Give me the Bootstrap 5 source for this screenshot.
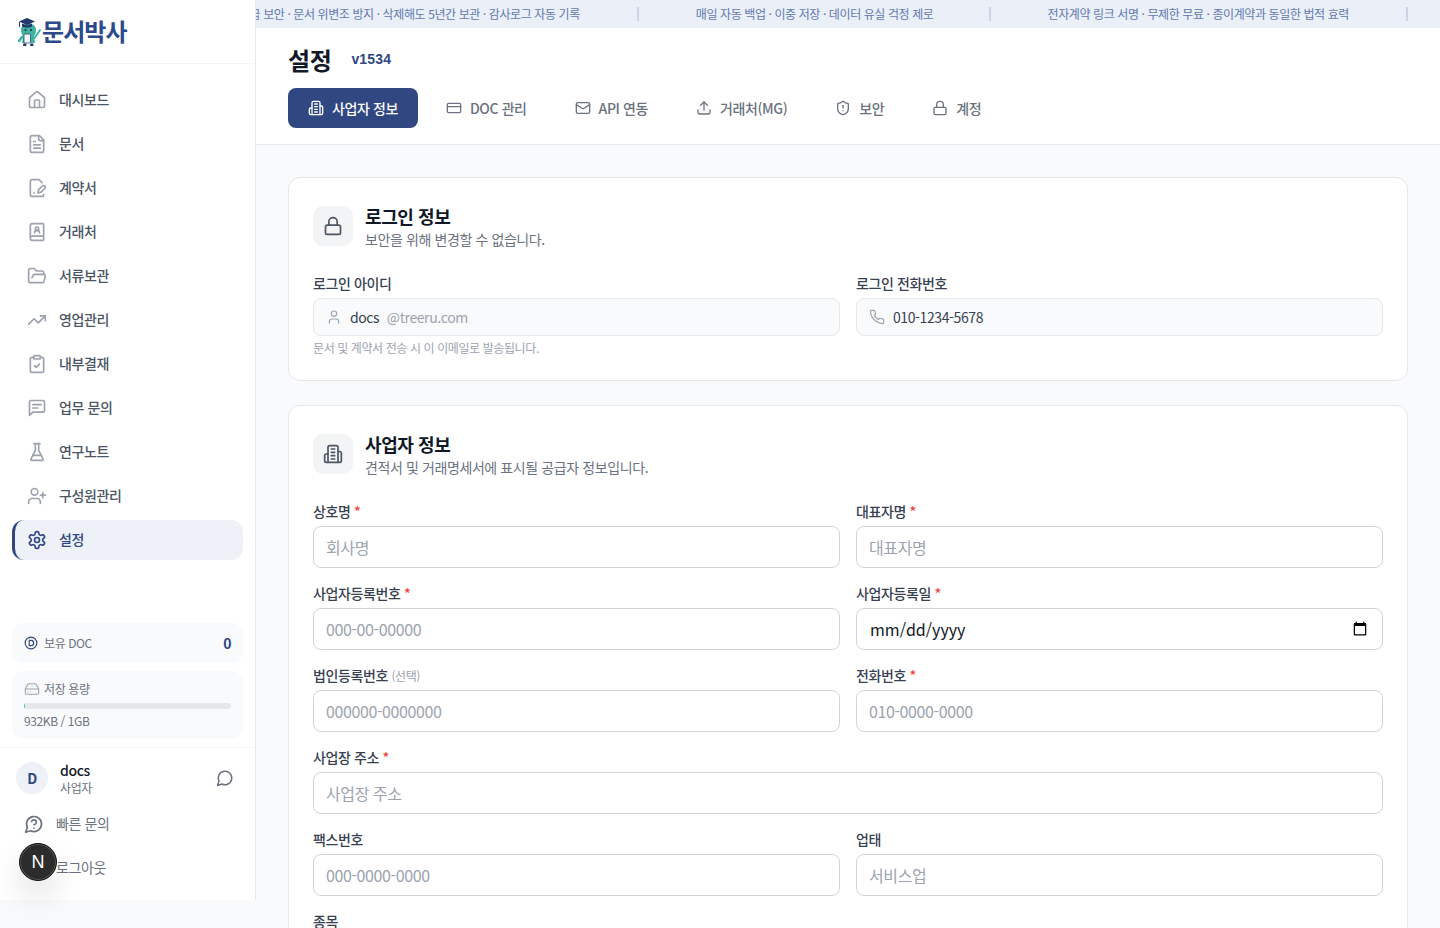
<!DOCTYPE html>
<html lang="ko">
<head>
<meta charset="utf-8">
<title>설정 - 문서박사</title>
<link rel="stylesheet" href="https://cdn.jsdelivr.net/npm/bootstrap@5.3.0/dist/css/bootstrap.min.css">
<style>
:root{--navy:#304781;}
html,body{height:100%;overflow:hidden;}
body{font-family:"Noto Sans CJK KR","Noto Sans",sans-serif;background:#f9fafb;color:#111827;font-size:14px;letter-spacing:-.4px;}
.ico{width:20px;height:20px;fill:none;stroke:currentColor;stroke-width:2;stroke-linecap:round;stroke-linejoin:round;flex-shrink:0;}
.ico-16{width:16px;height:16px;}
.ico-14{width:14px;height:14px;}
.ico-18{width:18px;height:18px;}
.shell{height:928px;}
.side{width:256px;height:900px;background:#fff;border-right:1px solid #e5e7eb;flex-shrink:0;}
.side-top{height:64px;border-bottom:1px solid #f3f4f6;padding:0 16px;}
.brand-name{font-size:24px;font-weight:700;color:#2c4a8a;letter-spacing:-.9px;line-height:1;padding-bottom:2px;}
.side-nav{padding:16px 12px 0;gap:4px;}
.side-link{height:40px;padding:0 12px 1px;border-left:3px solid transparent;border-radius:12px;color:#4b5563;font-weight:500;font-size:14px;gap:12px;text-decoration:none;}
.side-link .ico{color:#9ca3af;}
.side-link.on{background:#eef1f8;border-left-color:var(--navy);color:var(--navy);}
.side-link.on .ico{color:var(--navy);}
.side-stats{padding:0 12px 8px;gap:8px;margin-top:auto;border-bottom:1px solid #f3f4f6;}
.stat-box{background:#f9fafb;border-radius:12px;padding:0 12px;color:#6b7280;font-size:12px;}
.stat-doc{height:40px;}
.stat-store{height:68px;padding-top:12px;}
.stat-line{height:12px;gap:4px;line-height:12px;}
.stat-doc .ico{color:var(--navy);}
.stat-store .ico{color:#9ca3af;stroke-width:1.6;}
.stat-gap{gap:6px;}
.stat-val{font-weight:700;color:var(--navy);font-size:14px;}
.store-bar{height:6px;background:#e5e7eb;margin:8px 0 4px;border-radius:4px;}
.store-fill{background:#34d399;min-width:1px;}
.store-text{line-height:16px;}
.side-foot{padding:12px;}
.me-row{height:36px;padding:0 9px 0 4px;margin-bottom:8px;gap:12px;}
.me-ava{width:32px;height:32px;background:#eef1f8;color:var(--navy);font-weight:600;font-size:14px;}
.me-name{font-size:14px;font-weight:500;line-height:20px;color:#111827;}
.me-role{font-size:12px;line-height:16px;color:#6b7280;}
.me-chat{color:#6b7280;}
.foot-link{height:40px;padding:0 12px 1px;gap:12px;color:#6b7280;font-size:14px;text-decoration:none;}
.foot-link+.foot-link{margin-top:4px;}
.dev-badge{position:absolute;left:19px;top:843px;width:38px;height:38px;background:#2c2c2c;border:1px solid #111;box-shadow:inset 0 0 0 1px #555,0 16px 32px rgba(0,0,0,.12);color:#fff;font:400 18px/1 "Liberation Sans",sans-serif;letter-spacing:0;}
.main-pane{min-width:0;height:928px;}
.ticker{height:28px;background:#ebeff8;overflow:hidden;flex-shrink:0;padding-right:32px;gap:57px;font-size:12px;color:#6079ad;white-space:nowrap;}
.ticker>span{flex-shrink:0;}
.ticker>.tick-mid{margin-right:-2px;}
.tick-sep{width:2px;height:14px;background:#ccd5e6;}
.page-head{background:#fff;border-bottom:1px solid #e5e7eb;padding:16px 32px;height:117px;flex-shrink:0;}
.page-title{font-size:24px;line-height:32px;font-weight:700;color:#111827;margin:0;}
.page-ver{font:700 14px/30px "Liberation Sans",sans-serif;color:var(--navy);margin-left:20px;letter-spacing:.2px;padding-bottom:2px;}
.tabs-row{margin-top:12px;gap:8px;}
.tabs-row .nav-link{height:40px;padding:0 20px;gap:8px;display:flex;align-items:center;font-size:14px;font-weight:500;color:#6b7280;border-radius:8px;}
.tabs-row .nav-link.active{background:var(--navy);color:#fff;}
.page-body{padding:32px;gap:24px;}
.sheet{border:1px solid #e5e7eb;border-radius:12px;background:#fff;padding:24px;flex-shrink:0;box-shadow:none;}
.sheet-head{height:48px;margin-bottom:24px;gap:12px;}
.sheet-ico{width:40px;height:40px;background:#f3f4f6;border-radius:10px;color:#4b5563;}
.sheet-title{font-size:18px;font-weight:600;line-height:28px;color:#111827;margin:0;}
.sheet-sub{font-size:14px;height:20px;line-height:18px;color:#6b7280;margin:0;}
.field-label{font-size:14px;height:20px;line-height:19px;font-weight:500;color:#374151;margin-bottom:4px;display:block;}
.req{color:#ef4444;}
.opt{font-size:12px;line-height:1;font-weight:400;color:#9ca3af;}
.field-input{height:42px;border:1px solid #d1d5db;border-radius:8px;padding:0 12px;font-size:16px;color:#111827;letter-spacing:-.4px;}
.field-input::placeholder{color:#9ca3af;}
.field-date{letter-spacing:normal;padding-left:13px;}
.field-ro{height:38px;border:1px solid #e5e7eb;border-radius:8px;background:#f9fafb;padding:0 12px;gap:8px;font-size:14px;color:#374151;}
.field-ro .ico{color:#9ca3af;stroke-width:1.75;}
.dim{color:#9ca3af;margin-left:4px;}
.field-help{font-size:12px;line-height:16px;color:#9ca3af;margin-top:4px;}
</style>
</head>
<body>
<svg width="0" height="0" class="position-absolute" aria-hidden="true">
<symbol id="i-home" viewBox="0 0 24 24"><path d="M15 21v-8a1 1 0 0 0-1-1h-4a1 1 0 0 0-1 1v8"/><path d="M3 10a2 2 0 0 1 .709-1.528l7-5.999a2 2 0 0 1 2.582 0l7 5.999A2 2 0 0 1 21 10v9a2 2 0 0 1-2 2H5a2 2 0 0 1-2-2z"/></symbol>
<symbol id="i-file" viewBox="0 0 24 24"><path d="M15 2H6a2 2 0 0 0-2 2v16a2 2 0 0 0 2 2h12a2 2 0 0 0 2-2V7Z"/><path d="M14 2v4a2 2 0 0 0 2 2h4"/><path d="M10 9H8"/><path d="M16 13H8"/><path d="M16 17H8"/></symbol>
<symbol id="i-sign" viewBox="0 0 24 24"><path d="M20 19.5v.5a2 2 0 0 1-2 2H6a2 2 0 0 1-2-2V4a2 2 0 0 1 2-2h8.5L18 5.5"/><path d="M8 18h1"/><path d="M18.42 9.61a2.1 2.1 0 1 1 2.97 2.97L16.95 17 13 18l.99-3.95 4.43-4.44Z"/></symbol>
<symbol id="i-book" viewBox="0 0 24 24"><path d="M15 13a3 3 0 1 0-6 0"/><path d="M4 19.5v-15A2.5 2.5 0 0 1 6.5 2H19a1 1 0 0 1 1 1v18a1 1 0 0 1-1 1H6.5a1 1 0 0 1 0-5H20"/><circle cx="12" cy="8" r="2"/></symbol>
<symbol id="i-folder" viewBox="0 0 24 24"><path d="m6 14 1.5-2.9A2 2 0 0 1 9.24 10H20a2 2 0 0 1 1.94 2.5l-1.54 6a2 2 0 0 1-1.95 1.5H4a2 2 0 0 1-2-2V5a2 2 0 0 1 2-2h3.9a2 2 0 0 1 1.69.9l.81 1.2a2 2 0 0 0 1.67.9H18a2 2 0 0 1 2 2v2"/></symbol>
<symbol id="i-trend" viewBox="0 0 24 24"><polyline points="22 7 13.5 15.5 8.5 10.5 2 17"/><polyline points="16 7 22 7 22 13"/></symbol>
<symbol id="i-clip" viewBox="0 0 24 24"><rect width="8" height="4" x="8" y="2" rx="1"/><path d="M16 4h2a2 2 0 0 1 2 2v14a2 2 0 0 1-2 2H6a2 2 0 0 1-2-2V6a2 2 0 0 1 2-2h2"/><path d="m9 14 2 2 4-4"/></symbol>
<symbol id="i-msg" viewBox="0 0 24 24"><path d="M21 15a2 2 0 0 1-2 2H7l-4 4V5a2 2 0 0 1 2-2h14a2 2 0 0 1 2 2z"/><path d="M17 8H7"/><path d="M13 12H7"/></symbol>
<symbol id="i-flask" viewBox="0 0 24 24"><path d="M10 2v7.527a2 2 0 0 1-.211.896L4.72 20.55a1 1 0 0 0 .9 1.45h12.76a1 1 0 0 0 .9-1.45l-5.069-10.127A2 2 0 0 1 14 9.527V2"/><path d="M8.5 2h7"/><path d="M7 16h10"/></symbol>
<symbol id="i-uplus" viewBox="0 0 24 24"><path d="M16 21v-2a4 4 0 0 0-4-4H6a4 4 0 0 0-4 4v2"/><circle cx="9" cy="7" r="4"/><line x1="19" x2="19" y1="8" y2="14"/><line x1="22" x2="16" y1="11" y2="11"/></symbol>
<symbol id="i-gear" viewBox="0 0 24 24"><path d="M12.22 2h-.44a2 2 0 0 0-2 2v.18a2 2 0 0 1-1 1.73l-.43.25a2 2 0 0 1-2 0l-.15-.08a2 2 0 0 0-2.73.73l-.22.38a2 2 0 0 0 .73 2.73l.15.1a2 2 0 0 1 1 1.72v.51a2 2 0 0 1-1 1.74l-.15.09a2 2 0 0 0-.73 2.73l.22.38a2 2 0 0 0 2.73.73l.15-.08a2 2 0 0 1 2 0l.43.25a2 2 0 0 1 1 1.73V20a2 2 0 0 0 2 2h.44a2 2 0 0 0 2-2v-.18a2 2 0 0 1 1-1.73l.43-.25a2 2 0 0 1 2 0l.15.08a2 2 0 0 0 2.73-.73l.22-.39a2 2 0 0 0-.73-2.73l-.15-.08a2 2 0 0 1-1-1.74v-.5a2 2 0 0 1 1-1.74l.15-.09a2 2 0 0 0 .73-2.73l-.22-.38a2 2 0 0 0-2.73-.73l-.15.08a2 2 0 0 1-2 0l-.43-.25a2 2 0 0 1-1-1.73V4a2 2 0 0 0-2-2z"/><circle cx="12" cy="12" r="3"/></symbol>
<symbol id="i-build" viewBox="0 0 24 24"><path d="M6 22V4a2 2 0 0 1 2-2h8a2 2 0 0 1 2 2v18Z"/><path d="M6 12H4a2 2 0 0 0-2 2v6a2 2 0 0 0 2 2h2"/><path d="M18 9h2a2 2 0 0 1 2 2v9a2 2 0 0 1-2 2h-2"/><path d="M10 6h4"/><path d="M10 10h4"/><path d="M10 14h4"/><path d="M10 18h4"/></symbol>
<symbol id="i-card" viewBox="0 0 24 24"><rect width="20" height="14" x="2" y="5" rx="2"/><line x1="2" x2="22" y1="10" y2="10"/></symbol>
<symbol id="i-mail" viewBox="0 0 24 24"><rect width="20" height="16" x="2" y="4" rx="2"/><path d="m22 7-8.97 5.7a1.94 1.94 0 0 1-2.06 0L2 7"/></symbol>
<symbol id="i-up" viewBox="0 0 24 24"><path d="M21 15v4a2 2 0 0 1-2 2H5a2 2 0 0 1-2-2v-4"/><polyline points="17 8 12 3 7 8"/><line x1="12" x2="12" y1="3" y2="15"/></symbol>
<symbol id="i-shield" viewBox="0 0 24 24"><path d="M20 13c0 5-3.5 7.5-7.66 8.95a1 1 0 0 1-.67-.01C7.5 20.5 4 18 4 13V6a1 1 0 0 1 1-1c2 0 4.5-1.2 6.24-2.72a1.17 1.17 0 0 1 1.52 0C14.51 3.81 17 5 19 5a1 1 0 0 1 1 1z"/><path d="M12 8v4"/><path d="M12 16h.01"/></symbol>
<symbol id="i-lock" viewBox="0 0 24 24"><rect width="18" height="11" x="3" y="11" rx="2"/><path d="M7 11V7a5 5 0 0 1 10 0v4"/></symbol>
<symbol id="i-user" viewBox="0 0 24 24"><path d="M19 21v-2a4 4 0 0 0-4-4H9a4 4 0 0 0-4 4v2"/><circle cx="12" cy="7" r="4"/></symbol>
<symbol id="i-phone" viewBox="0 0 24 24"><path d="M22 16.92v3a2 2 0 0 1-2.18 2 19.79 19.79 0 0 1-8.63-3.07 19.5 19.5 0 0 1-6-6 19.79 19.79 0 0 1-3.07-8.67A2 2 0 0 1 4.11 2h3a2 2 0 0 1 2 1.72 12.84 12.84 0 0 0 .7 2.81 2 2 0 0 1-.45 2.11L8.09 9.91a16 16 0 0 0 6 6l1.27-1.27a2 2 0 0 1 2.11-.45 12.84 12.84 0 0 0 2.81.7A2 2 0 0 1 22 16.92z"/></symbol>
<symbol id="i-drive" viewBox="0 0 24 24"><line x1="22" x2="2" y1="12" y2="12"/><path d="M5.45 5.11 2 12v6a2 2 0 0 0 2 2h16a2 2 0 0 0 2-2v-6l-3.45-6.89A2 2 0 0 0 16.76 4H7.24a2 2 0 0 0-1.79 1.11z"/><line x1="6" x2="6.01" y1="16" y2="16"/><line x1="10" x2="10.01" y1="16" y2="16"/></symbol>
<symbol id="i-chat" viewBox="0 0 24 24"><path d="M7.9 20A9 9 0 1 0 4 16.1L2 22Z"/></symbol>
<symbol id="i-help" viewBox="0 0 24 24"><path d="M7.9 20A9 9 0 1 0 4 16.1L2 22Z"/><path d="M9.09 9a3 3 0 0 1 5.83 1c0 2-3 3-3 3"/><path d="M12 17h.01"/></symbol>
<symbol id="i-out" viewBox="0 0 24 24"><path d="M9 21H5a2 2 0 0 1-2-2V5a2 2 0 0 1 2-2h4"/><polyline points="16 17 21 12 16 7"/><line x1="21" x2="9" y1="12" y2="12"/></symbol>
<symbol id="i-coin" viewBox="0 0 24 24"><circle cx="12" cy="12" r="10"/><path d="M9 7.500h3a4.500 4.500 0 0 1 0 9H9z"/></symbol>
</svg>

<div class="shell d-flex">
  <aside class="side d-flex flex-column">
    <div class="side-top d-flex align-items-center">
      <svg width="26" height="30" viewBox="0 0 26 30" aria-hidden="true">
        <path d="M5 13c0-4 3-6.500 7.500-6.500S20 9 20 13c0 3-1 5-2 6l1 7H6l1-7c-1-1-2-3-2-6z" fill="#3fb39f"/>
        <path d="M3 4.500 11 1l8 3.500-8 3.500z" fill="#24386b"/>
        <path d="M6 6.500v3c2.500 1.500 7.500 1.500 10 0v-3l-5 2z" fill="#24386b"/>
        <path d="M3.500 5v5" stroke="#24386b" stroke-width="1"/>
        <circle cx="9.500" cy="13" r="1" fill="#17304f"/><circle cx="15" cy="13" r="1" fill="#17304f"/>
        <rect x="8" y="17" width="6.500" height="9" rx="1" fill="#eef6f4" stroke="#24386b" stroke-width=".7"/>
        <path d="M18.500 21 24 13" stroke="#3fb39f" stroke-width="2" stroke-linecap="round"/>
        <path d="M6 20 3 24" stroke="#3fb39f" stroke-width="2.500" stroke-linecap="round"/>
        <rect x="7" y="26.500" width="3.500" height="2.500" rx="1" fill="#24386b"/>
        <rect x="14" y="26.500" width="3.500" height="2.500" rx="1" fill="#24386b"/>
      </svg>
      <span class="brand-name">문서박사</span>
    </div>
    <nav class="side-nav nav flex-column flex-nowrap">
      <a class="side-link d-flex align-items-center" href="#"><svg class="ico"><use href="#i-home"/></svg>대시보드</a>
      <a class="side-link d-flex align-items-center" href="#"><svg class="ico"><use href="#i-file"/></svg>문서</a>
      <a class="side-link d-flex align-items-center" href="#"><svg class="ico"><use href="#i-sign"/></svg>계약서</a>
      <a class="side-link d-flex align-items-center" href="#"><svg class="ico"><use href="#i-book"/></svg>거래처</a>
      <a class="side-link d-flex align-items-center" href="#"><svg class="ico"><use href="#i-folder"/></svg>서류보관</a>
      <a class="side-link d-flex align-items-center" href="#"><svg class="ico"><use href="#i-trend"/></svg>영업관리</a>
      <a class="side-link d-flex align-items-center" href="#"><svg class="ico"><use href="#i-clip"/></svg>내부결재</a>
      <a class="side-link d-flex align-items-center" href="#"><svg class="ico"><use href="#i-msg"/></svg>업무 문의</a>
      <a class="side-link d-flex align-items-center" href="#"><svg class="ico"><use href="#i-flask"/></svg>연구노트</a>
      <a class="side-link d-flex align-items-center" href="#"><svg class="ico"><use href="#i-uplus"/></svg>구성원관리</a>
      <a class="side-link on d-flex align-items-center" href="#"><svg class="ico"><use href="#i-gear"/></svg>설정</a>
    </nav>
    <div class="side-stats d-flex flex-column">
      <div class="stat-box stat-doc d-flex align-items-center justify-content-between">
        <span class="d-flex align-items-center stat-gap"><svg class="ico ico-14"><use href="#i-coin"/></svg>보유 DOC</span>
        <span class="stat-val">0</span>
      </div>
      <div class="stat-box stat-store">
        <div class="stat-line d-flex align-items-center"><svg class="ico ico-16"><use href="#i-drive"/></svg>저장 용량</div>
        <div class="progress store-bar"><div class="progress-bar store-fill" style="width:0.1%"></div></div>
        <div class="store-text">932KB / 1GB</div>
      </div>
    </div>
    <div class="side-foot">
      <div class="me-row d-flex align-items-center">
        <div class="me-ava rounded-circle d-flex align-items-center justify-content-center">D</div>
        <div class="flex-grow-1">
          <div class="me-name">docs</div>
          <div class="me-role">사업자</div>
        </div>
        <svg class="ico ico-18 me-chat"><use href="#i-chat"/></svg>
      </div>
      <a class="foot-link d-flex align-items-center" href="#"><svg class="ico"><use href="#i-help"/></svg>빠른 문의</a>
      <a class="foot-link d-flex align-items-center" href="#"><svg class="ico"><use href="#i-out"/></svg>로그아웃</a>
    </div>
  </aside>

  <main class="main-pane flex-grow-1 d-flex flex-column overflow-hidden">
    <div class="ticker d-flex align-items-center justify-content-end">
      <span>은행급 보안 · 문서 위변조 방지 · 삭제해도 5년간 보관 · 감사로그 자동 기록</span>
      <span class="tick-sep"></span>
      <span class="tick-mid">매일 자동 백업 · 이중 저장 · 데이터 유실 걱정 제로</span>
      <span class="tick-sep"></span>
      <span>전자계약 링크 서명 · 무제한 무료 · 종이계약과 동일한 법적 효력</span>
      <span class="tick-sep"></span>
    </div>
    <header class="page-head">
      <div class="d-flex align-items-center">
        <h1 class="page-title">설정</h1>
        <span class="page-ver">v1534</span>
      </div>
      <ul class="nav tabs-row">
        <li class="nav-item"><a class="nav-link active" href="#"><svg class="ico ico-16"><use href="#i-build"/></svg>사업자 정보</a></li>
        <li class="nav-item"><a class="nav-link" href="#"><svg class="ico ico-16"><use href="#i-card"/></svg>DOC 관리</a></li>
        <li class="nav-item"><a class="nav-link" href="#"><svg class="ico ico-16"><use href="#i-mail"/></svg>API 연동</a></li>
        <li class="nav-item"><a class="nav-link" href="#"><svg class="ico ico-16"><use href="#i-up"/></svg>거래처(MG)</a></li>
        <li class="nav-item"><a class="nav-link" href="#"><svg class="ico ico-16"><use href="#i-shield"/></svg>보안</a></li>
        <li class="nav-item"><a class="nav-link" href="#"><svg class="ico ico-16"><use href="#i-lock"/></svg>계정</a></li>
      </ul>
    </header>
    <div class="page-body d-flex flex-column flex-grow-1 overflow-hidden">
      <section class="sheet">
        <div class="sheet-head d-flex align-items-center">
          <div class="sheet-ico d-flex align-items-center justify-content-center"><svg class="ico"><use href="#i-lock"/></svg></div>
          <div>
            <h2 class="sheet-title">로그인 정보</h2>
            <p class="sheet-sub">보안을 위해 변경할 수 없습니다.</p>
          </div>
        </div>
        <div class="row g-3">
          <div class="col-6">
            <label class="field-label">로그인 아이디</label>
            <div class="field-ro d-flex align-items-center"><svg class="ico ico-16"><use href="#i-user"/></svg><span>docs <span class="dim">@treeru.com</span></span></div>
            <div class="field-help">문서 및 계약서 전송 시 이 이메일로 발송됩니다.</div>
          </div>
          <div class="col-6">
            <label class="field-label">로그인 전화번호</label>
            <div class="field-ro d-flex align-items-center"><svg class="ico ico-16"><use href="#i-phone"/></svg><span>010-1234-5678</span></div>
          </div>
        </div>
      </section>
      <section class="sheet">
        <div class="sheet-head d-flex align-items-center">
          <div class="sheet-ico d-flex align-items-center justify-content-center"><svg class="ico"><use href="#i-build"/></svg></div>
          <div>
            <h2 class="sheet-title">사업자 정보</h2>
            <p class="sheet-sub">견적서 및 거래명세서에 표시될 공급자 정보입니다.</p>
          </div>
        </div>
        <form class="row g-3">
          <div class="col-6"><label class="field-label">상호명 <span class="req">*</span></label><input class="form-control field-input" placeholder="회사명"></div>
          <div class="col-6"><label class="field-label">대표자명 <span class="req">*</span></label><input class="form-control field-input" placeholder="대표자명"></div>
          <div class="col-6"><label class="field-label">사업자등록번호 <span class="req">*</span></label><input class="form-control field-input" placeholder="000-00-00000"></div>
          <div class="col-6"><label class="field-label">사업자등록일 <span class="req">*</span></label><input type="date" class="form-control field-input field-date"></div>
          <div class="col-6"><label class="field-label">법인등록번호 <span class="opt">(선택)</span></label><input class="form-control field-input" placeholder="000000-0000000"></div>
          <div class="col-6"><label class="field-label">전화번호 <span class="req">*</span></label><input class="form-control field-input" placeholder="010-0000-0000"></div>
          <div class="col-12"><label class="field-label">사업장 주소 <span class="req">*</span></label><input class="form-control field-input" placeholder="사업장 주소"></div>
          <div class="col-6"><label class="field-label">팩스번호</label><input class="form-control field-input" placeholder="000-0000-0000"></div>
          <div class="col-6"><label class="field-label">업태</label><input class="form-control field-input" placeholder="서비스업"></div>
          <div class="col-6"><label class="field-label">종목</label><input class="form-control field-input" placeholder="소프트웨어"></div>
        </form>
      </section>
    </div>
  </main>
</div>
<div class="dev-badge rounded-circle d-flex align-items-center justify-content-center">N</div>
<script src="https://cdn.jsdelivr.net/npm/bootstrap@5.3.0/dist/js/bootstrap.bundle.min.js"></script>
</body>
</html>
